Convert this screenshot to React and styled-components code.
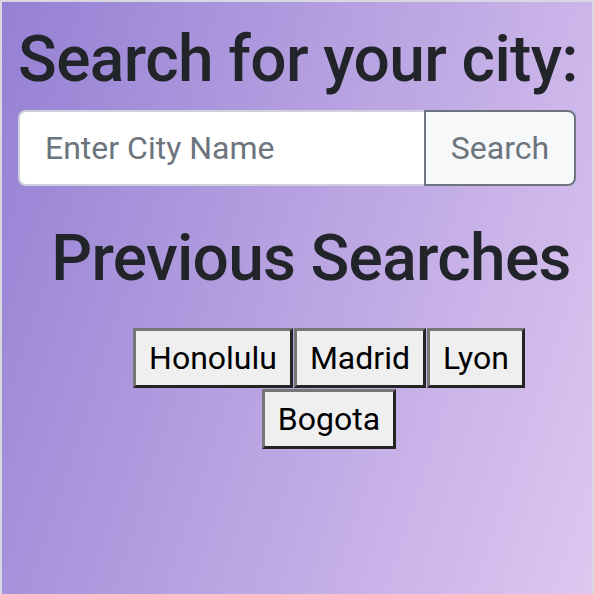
import React from "react";
import styled, { createGlobalStyle } from "styled-components";

const Global = createGlobalStyle`
  html, body { margin: 0; padding: 0; }
  body {
    background: #d9d8e0;
    font-family: Roboto, "Liberation Sans", sans-serif;
    color: #212529;
  }
`;

const Page = styled.div`
  margin: 2px 2px 0;
  min-height: calc(100vh - 2px);
  box-sizing: border-box;
  padding: 20px 16px 16px;
  background: linear-gradient(108deg, #9580d4 0%, #dec7f0 100%);
`;

const Title = styled.h1`
  margin: 0 0 11px;
  font-size: 64px;
  line-height: 1.2;
  font-weight: 500;
  letter-spacing: -0.6px;
  color: #212529;
  white-space: nowrap;
`;

const InputGroup = styled.div`
  display: flex;
  height: 76px;
`;

const CityInput = styled.input`
  flex: 1;
  min-width: 0;
  box-sizing: border-box;
  height: 100%;
  padding: 0 25px;
  font-family: Roboto, "Liberation Sans", sans-serif;
  font-size: 32px;
  color: #212529;
  background: #fff;
  border: 2px solid #cfd0dc;
  border-right: none;
  border-radius: 8px 0 0 8px;
  outline: none;
  &::placeholder { color: #6c757d; opacity: 1; }
`;

const SearchButton = styled.button`
  box-sizing: border-box;
  height: 100%;
  width: 152px;
  padding: 0 24px;
  font-family: Roboto, "Liberation Sans", sans-serif;
  font-size: 32px;
  color: #6c757d;
  background: #f7f8fa;
  border: 2px solid #6c757d;
  border-radius: 0 8px 8px 0;
`;

const Section = styled.section`
  margin-top: 35px;
  padding-left: 28px;
  display: flex;
  flex-direction: column;
  align-items: center;
`;

const SubTitle = styled.h2`
  margin: 0;
  font-size: 64px;
  line-height: 1.2;
  font-weight: 500;
  letter-spacing: -0.7px;
  color: #212529;
  white-space: nowrap;
`;

const HistoryList = styled.div`
  margin-top: 30px;
  align-self: stretch;
  padding-left: 36px;
  display: flex;
  flex-wrap: wrap;
  justify-content: center;
  gap: 1px 1px;
`;

const CityButton = styled.button`
  box-sizing: border-box;
  height: 60px;
  padding: 0 13px;
  font-family: Roboto, "Liberation Sans", sans-serif;
  font-size: 32px;
  color: #000;
  background: #efefef;
  border-width: 3px;
  border-style: solid;
  border-color: #767676 #242424 #242424 #767676;
`;

const cities = ["Honolulu", "Madrid", "Lyon", "Bogota"];

export default function App() {
  return (
    <>
      <Global />
      <Page>
        <Title>Search for your city:</Title>
        <InputGroup>
          <CityInput placeholder="Enter City Name" />
          <SearchButton>Search</SearchButton>
        </InputGroup>
        <Section>
          <SubTitle>Previous Searches</SubTitle>
          <HistoryList>
            {cities.map((c) => (
              <CityButton key={c}>{c}</CityButton>
            ))}
          </HistoryList>
        </Section>
      </Page>
    </>
  );
}
